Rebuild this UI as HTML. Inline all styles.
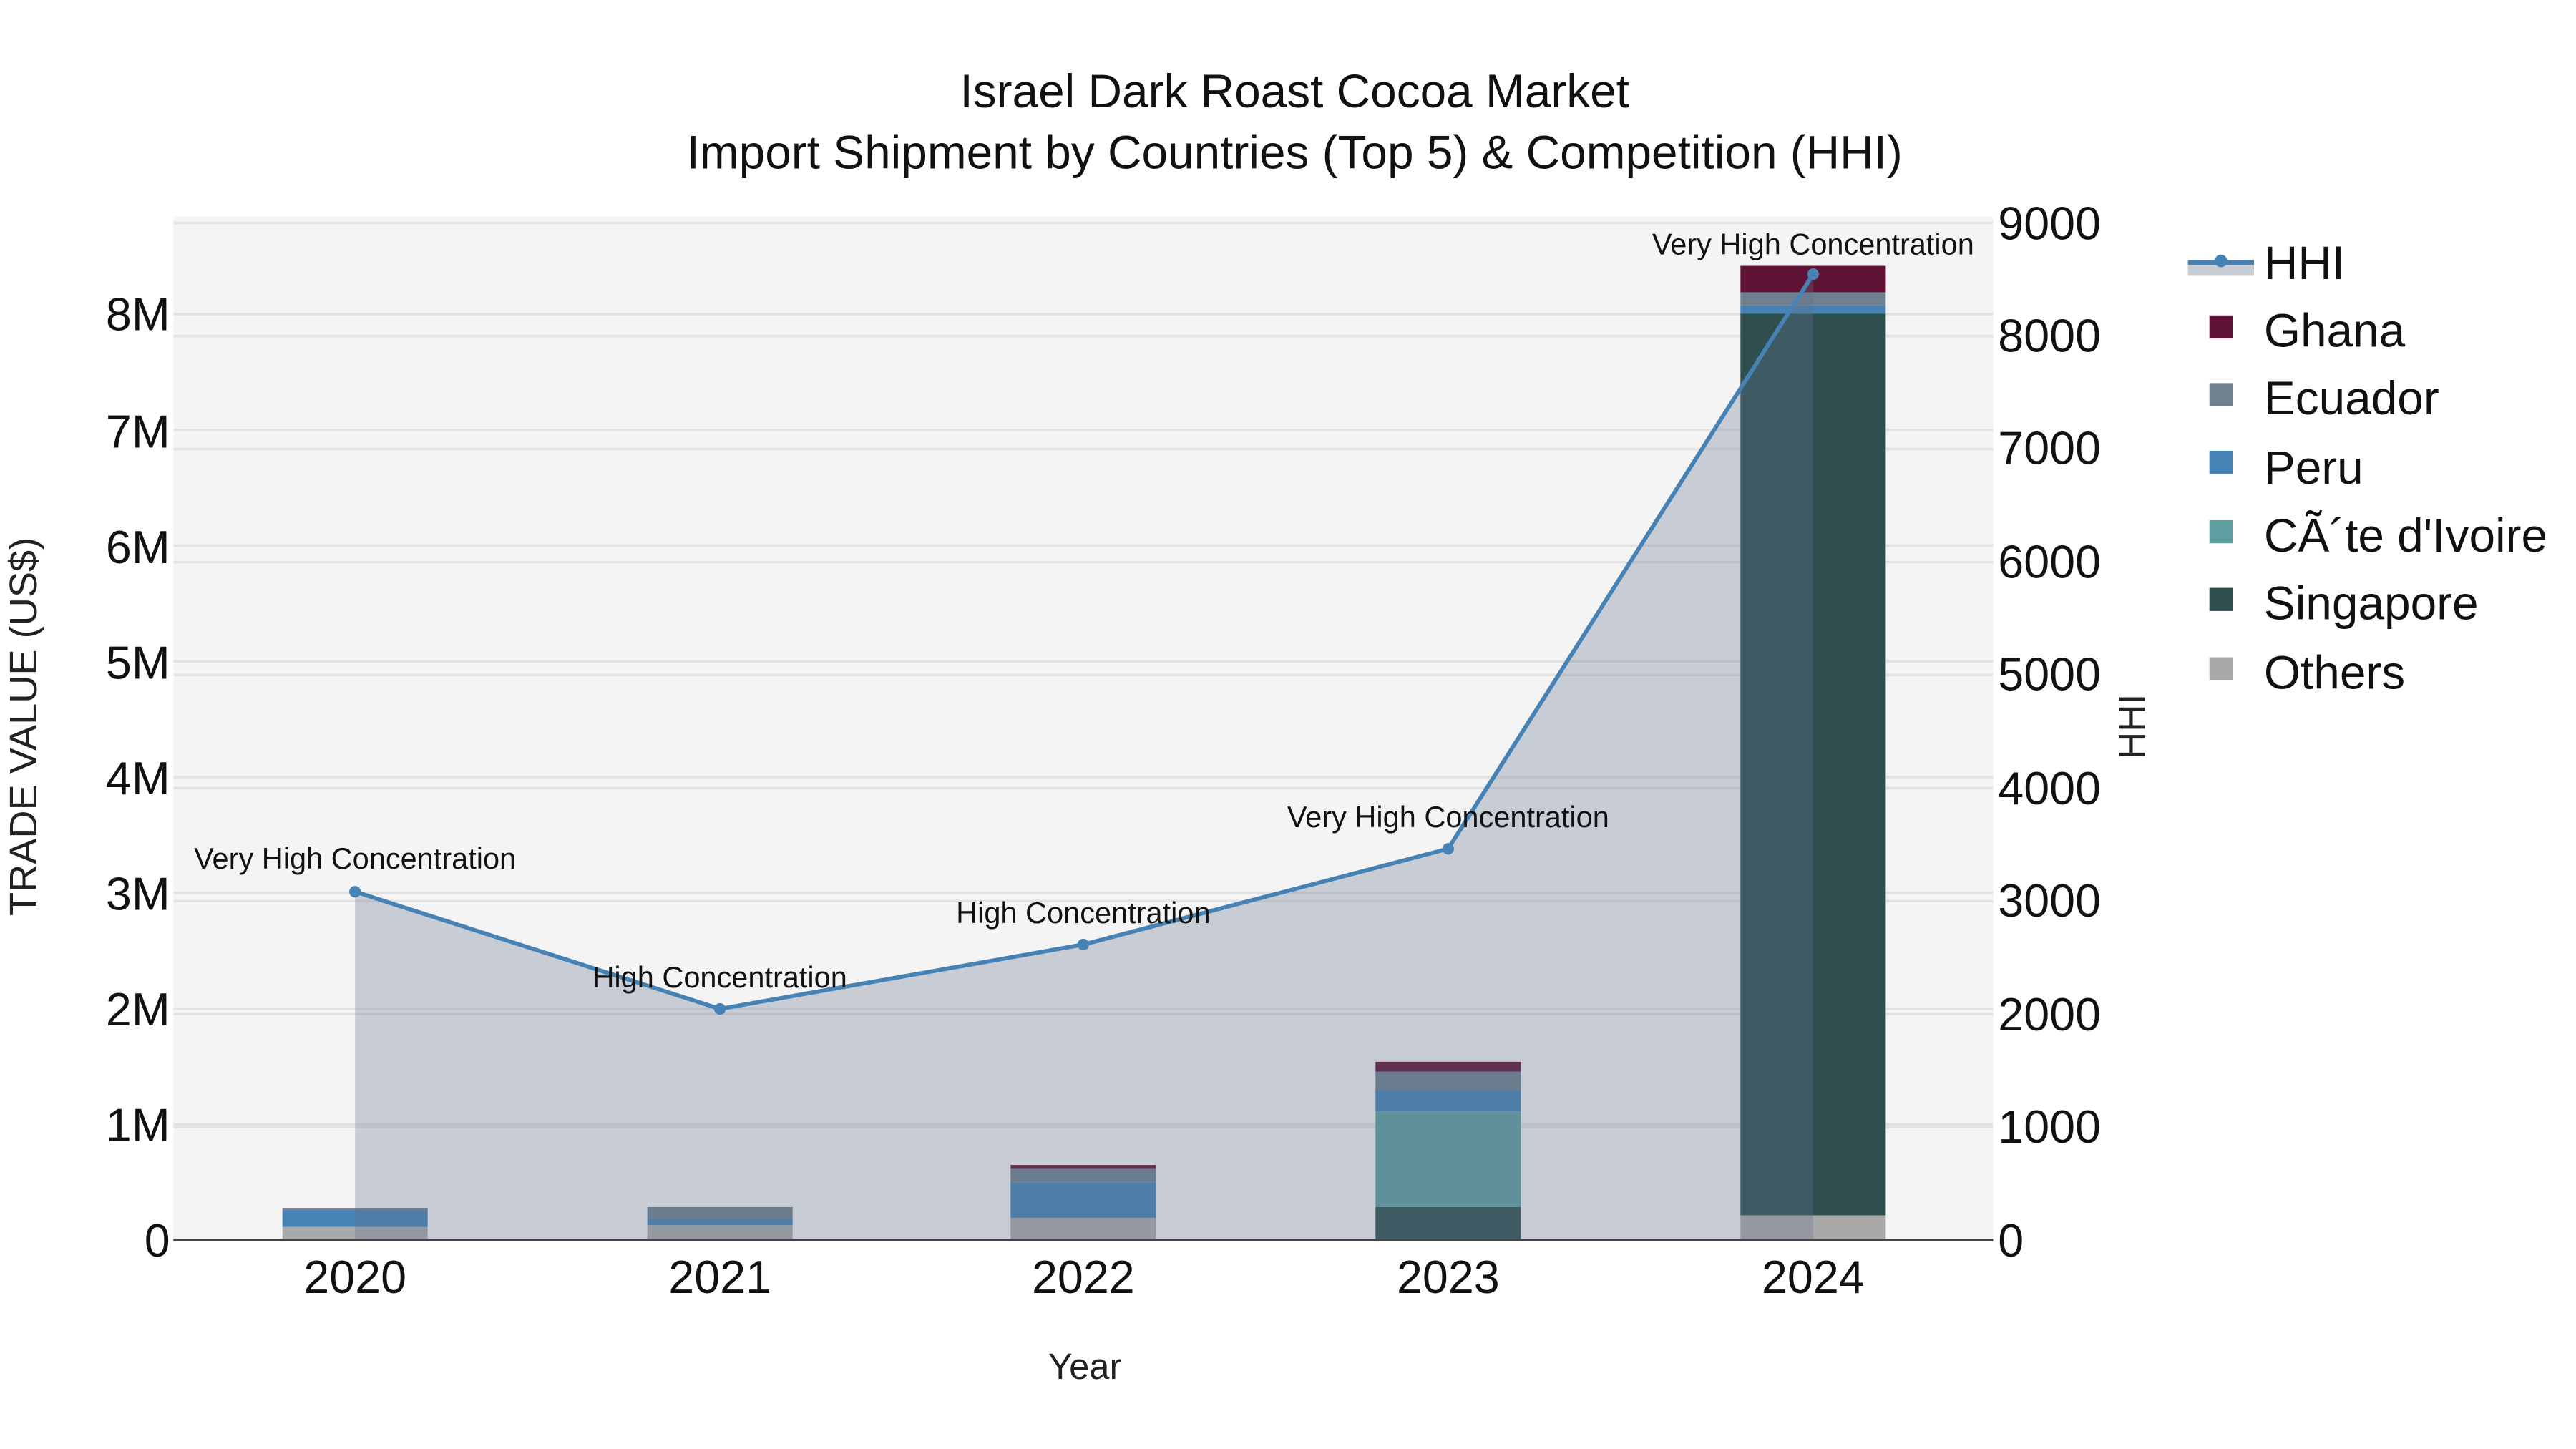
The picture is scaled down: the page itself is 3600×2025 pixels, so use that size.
<!DOCTYPE html>
<html><head><meta charset="utf-8"><style>html,body{margin:0;padding:0;background:#fff}svg{display:block}</style></head>
<body>
<svg width="3600" height="2025" viewBox="0 0 1560 877.5" xmlns="http://www.w3.org/2000/svg" font-family="'Liberation Sans', sans-serif">
<rect width="1560" height="877.5" fill="#fff"/>
<rect x="105" y="131" width="1102" height="620" fill="#f4f4f4"/>
<g stroke="#e2e2e2" stroke-width="1.5">
<line x1="105" x2="1207" y1="680.9" y2="680.9"/><line x1="105" x2="1207" y1="610.8" y2="610.8"/><line x1="105" x2="1207" y1="540.7" y2="540.7"/><line x1="105" x2="1207" y1="470.6" y2="470.6"/><line x1="105" x2="1207" y1="400.5" y2="400.5"/><line x1="105" x2="1207" y1="330.4" y2="330.4"/><line x1="105" x2="1207" y1="260.3" y2="260.3"/><line x1="105" x2="1207" y1="190.2" y2="190.2"/>
<line x1="105" x2="1207" y1="682.6" y2="682.6"/><line x1="105" x2="1207" y1="614.1" y2="614.1"/><line x1="105" x2="1207" y1="545.7" y2="545.7"/><line x1="105" x2="1207" y1="477.2" y2="477.2"/><line x1="105" x2="1207" y1="408.8" y2="408.8"/><line x1="105" x2="1207" y1="340.4" y2="340.4"/><line x1="105" x2="1207" y1="271.9" y2="271.9"/><line x1="105" x2="1207" y1="203.5" y2="203.5"/><line x1="105" x2="1207" y1="135" y2="135"/>
</g>
<g>
<rect x="171" y="743" width="88" height="8" fill="#a9a9a9"/><rect x="171" y="733" width="88" height="10" fill="#4682b4"/><rect x="171" y="731.5" width="88" height="1.5" fill="#708090"/>
<rect x="392" y="742" width="88" height="9" fill="#a9a9a9"/><rect x="392" y="738" width="88" height="4" fill="#4682b4"/><rect x="392" y="731" width="88" height="7" fill="#708090"/>
<rect x="612" y="737.5" width="88" height="13.5" fill="#a9a9a9"/><rect x="612" y="716" width="88" height="21.5" fill="#4682b4"/><rect x="612" y="707.5" width="88" height="8.5" fill="#708090"/><rect x="612" y="705.5" width="88" height="2" fill="#611335"/>
<rect x="833" y="731" width="88" height="20" fill="#2f4f4f"/><rect x="833" y="673" width="88" height="58" fill="#5f9ea0"/><rect x="833" y="660" width="88" height="13" fill="#4682b4"/><rect x="833" y="649" width="88" height="11" fill="#708090"/><rect x="833" y="643" width="88" height="6" fill="#611335"/>
<rect x="1054" y="736" width="88" height="15" fill="#a9a9a9"/><rect x="1054" y="190" width="88" height="546" fill="#2f4f4f"/><rect x="1054" y="185" width="88" height="5" fill="#4682b4"/><rect x="1054" y="177" width="88" height="8" fill="#708090"/><rect x="1054" y="161" width="88" height="16" fill="#611335"/>
</g>
<path d="M215,540 L436,611 L656,572 L877,514 L1098,166 L1098,751 L215,751 Z" fill="rgb(101,117,142)" fill-opacity="0.3"/>
<polyline points="215,540 436,611 656,572 877,514 1098,166" fill="none" stroke="#4682b4" stroke-width="2.5"/>
<g fill="#4682b4"><circle cx="215" cy="540" r="3.5"/><circle cx="436" cy="611" r="3.5"/><circle cx="656" cy="572" r="3.5"/><circle cx="877" cy="514" r="3.5"/><circle cx="1098" cy="166" r="3.5"/></g>
<line x1="105" x2="1207" y1="751" y2="751" stroke="#444" stroke-width="1.5"/>
<g font-size="18" fill="#111" text-anchor="middle">
<text x="215" y="526">Very High Concentration</text>
<text x="436" y="598">High Concentration</text>
<text x="656" y="559">High Concentration</text>
<text x="877" y="501">Very High Concentration</text>
<text x="1098" y="154">Very High Concentration</text>
</g>
<g font-size="28.5" fill="#111" text-anchor="middle">
<text x="784" y="65">Israel Dark Roast Cocoa Market</text>
<text x="784" y="102">Import Shipment by Countries (Top 5) &amp; Competition (HHI)</text>
</g>
<g font-size="28" fill="#111" text-anchor="end">
<text x="103" y="761">0</text><text x="103" y="691">1M</text><text x="103" y="621">2M</text><text x="103" y="551">3M</text><text x="103" y="481">4M</text><text x="103" y="411">5M</text><text x="103" y="341">6M</text><text x="103" y="271">7M</text><text x="103" y="200">8M</text>
</g>
<g font-size="28" fill="#111">
<text x="1210" y="761">0</text><text x="1210" y="692">1000</text><text x="1210" y="624">2000</text><text x="1210" y="555">3000</text><text x="1210" y="487">4000</text><text x="1210" y="418">5000</text><text x="1210" y="350">6000</text><text x="1210" y="281">7000</text><text x="1210" y="213">8000</text><text x="1210" y="145">9000</text>
</g>
<g font-size="28" fill="#111" text-anchor="middle">
<text x="215" y="783">2020</text><text x="436" y="783">2021</text><text x="656" y="783">2022</text><text x="877" y="783">2023</text><text x="1098" y="783">2024</text>
</g>
<text x="657" y="835" font-size="22" fill="#222" text-anchor="middle">Year</text>
<text transform="translate(22,440) rotate(-90)" font-size="23.5" fill="#222" text-anchor="middle">TRADE VALUE (US$)</text>
<text transform="translate(1299,440) rotate(-90)" font-size="23" fill="#222" text-anchor="middle">HHI</text>
<rect x="1325" y="159" width="40" height="8" fill="#c9ced5"/>
<line x1="1325" x2="1365" y1="159" y2="159" stroke="#4682b4" stroke-width="3"/>
<circle cx="1345" cy="158" r="3.8" fill="#4682b4"/>
<rect x="1338" y="191" width="14" height="14" fill="#611335"/>
<rect x="1338" y="232" width="14" height="14" fill="#708090"/>
<rect x="1338" y="273" width="14" height="14" fill="#4682b4"/>
<rect x="1338" y="315" width="14" height="14" fill="#5f9ea0"/>
<rect x="1338" y="356" width="14" height="14" fill="#2f4f4f"/>
<rect x="1338" y="398" width="14" height="14" fill="#a9a9a9"/>
<g font-size="28.5" fill="#111">
<text x="1371" y="169">HHI</text><text x="1371" y="210">Ghana</text><text x="1371" y="251">Ecuador</text><text x="1371" y="293">Peru</text><text x="1371" y="334">CÃ´te d'Ivoire</text><text x="1371" y="375">Singapore</text><text x="1371" y="417">Others</text>
</g>
</svg>
</body></html>
